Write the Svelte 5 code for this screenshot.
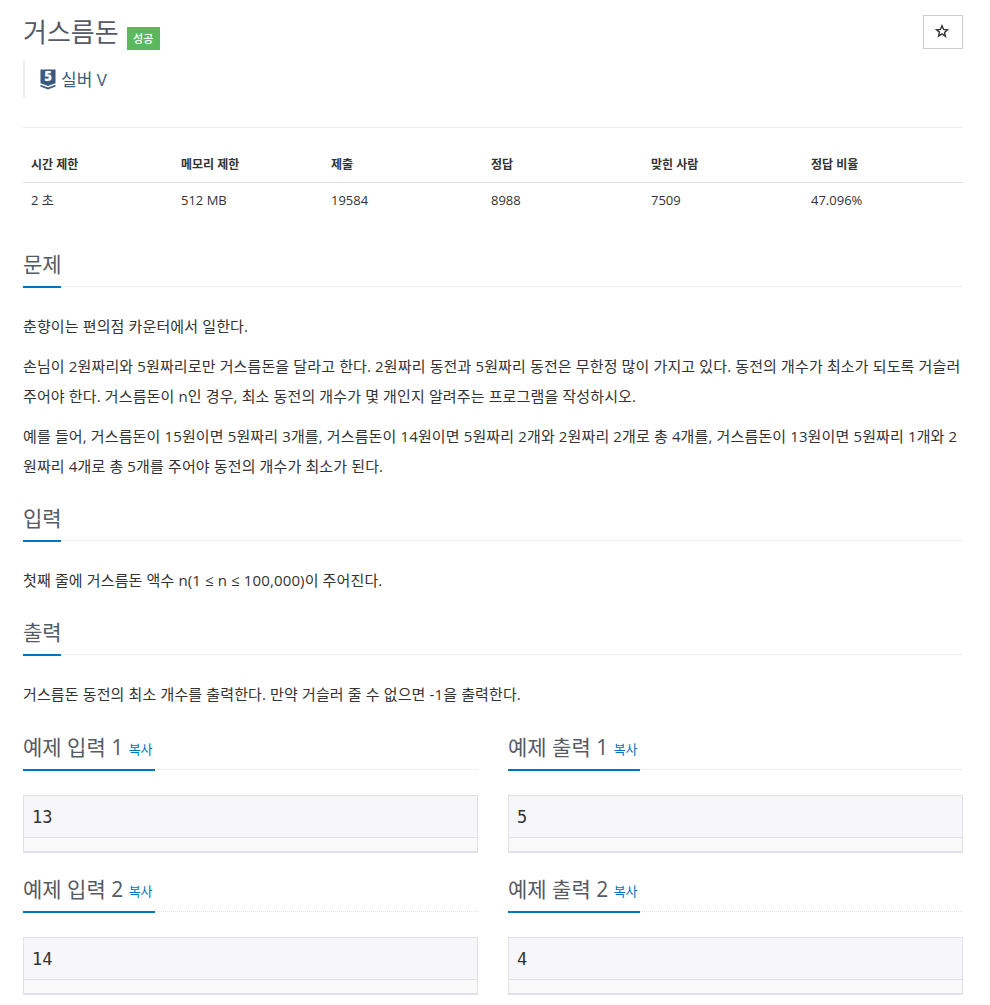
<script>
  const stats = [
    { head: '시간 제한', value: '2 초' },
    { head: '메모리 제한', value: '512 MB' },
    { head: '제출', value: '19584' },
    { head: '정답', value: '8988' },
    { head: '맞힌 사람', value: '7509' },
    { head: '정답 비율', value: '47.096%' }
  ];
  const samples = [
    { input: '13', output: '5', n: 1 },
    { input: '14', output: '4', n: 2 }
  ];
</script>

<div class="page">
  <header class="top">
    <div class="top__title">
      <h1 class="title">거스름돈</h1>
      <span class="badge">성공</span>
    </div>
    <button class="star" aria-label="즐겨찾기">
      <svg width="14" height="14" viewBox="0 0 24 24" fill="none" stroke="#333" stroke-width="2.4" stroke-linejoin="miter">
        <path d="M12 3l2.7 6.3 6.8.6-5.2 4.5 1.6 6.7L12 17l-5.9 3.6 1.6-6.7L2.5 9.9l6.8-.6z" />
      </svg>
    </button>
  </header>

  <blockquote class="tier">
    <svg class="tier__icon" width="16" height="21" viewBox="0 0 17 22">
      <path d="M0.5 0.5h16v14.5l-8 3-8-3z" fill="#3b5a7d" />
      <path d="M0.5 16.5l8 3 8-3v2l-8 3-8-3z" fill="#3b5a7d" />
      <text x="8.5" y="13" text-anchor="middle" class="tier__num">5</text>
    </svg>
    <span class="tier__name">실버 V</span>
  </blockquote>

  <hr class="rule" />

  <div class="stats">
    {#each stats as s}
      <div class="stats__head">{s.head}</div>
    {/each}
    {#each stats as s}
      <div class="stats__cell">{s.value}</div>
    {/each}
  </div>

  <section class="section">
    <div class="headline"><h2>문제</h2></div>
    <div class="body">
      <p>춘향이는 편의점 카운터에서 일한다.</p>
      <p>손님이 2원짜리와 5원짜리로만 거스름돈을 달라고 한다. 2원짜리 동전과 5원짜리 동전은 무한정 많이 가지고 있다. 동전의 개수가 최소가 되도록 거슬러 주어야 한다. 거스름돈이 n인 경우, 최소 동전의 개수가 몇 개인지 알려주는 프로그램을 작성하시오.</p>
      <p>예를 들어, 거스름돈이 15원이면 5원짜리 3개를, 거스름돈이 14원이면 5원짜리 2개와 2원짜리 2개로 총 4개를, 거스름돈이 13원이면 5원짜리 1개와 2원짜리 4개로 총 5개를 주어야 동전의 개수가 최소가 된다.</p>
    </div>
  </section>

  <section class="section">
    <div class="headline"><h2>입력</h2></div>
    <div class="body">
      <p>첫째 줄에 거스름돈 액수 n(1 ≤ n ≤ 100,000)이 주어진다.</p>
    </div>
  </section>

  <section class="section">
    <div class="headline"><h2>출력</h2></div>
    <div class="body">
      <p>거스름돈 동전의 최소 개수를 출력한다. 만약 거슬러 줄 수 없으면 -1을 출력한다.</p>
    </div>
  </section>

  <div class="samples">
    {#each samples as s}
      <section class="sample">
        <div class="headline"><h2>예제 입력 {s.n} <a class="copy" href="#top">복사</a></h2></div>
        <pre class="sample__data">{s.input}</pre>
        <div class="sample__foot"></div>
      </section>
      <section class="sample">
        <div class="headline"><h2>예제 출력 {s.n} <a class="copy" href="#top">복사</a></h2></div>
        <pre class="sample__data">{s.output}</pre>
        <div class="sample__foot"></div>
      </section>
    {/each}
  </div>
</div>

<style>
  :global(body) {
    background: #fff;
    font-family: "Open Sans", "Noto Sans CJK KR", sans-serif;
    color: #333;
  }

  .page {
    width: 940px;
    height: 1005px;
    overflow: hidden;
    padding: 15px 27px 0 23px;
  }

  .top {
    display: flex;
    justify-content: space-between;
    align-items: flex-start;
    height: 45px;
  }

  .top__title {
    display: flex;
    align-items: center;
    gap: 8px;
    height: 34px;
  }

  .title {
    margin: 0;
    font-size: 26px;
    line-height: 34px;
    font-weight: 400;
    color: #555a64;
  }

  .badge {
    display: flex;
    align-items: center;
    justify-content: center;
    width: 33px;
    height: 23px;
    margin-top: 12px;
    background: #5cb85c;
    color: #fff;
    font-size: 11px;
    font-weight: 500;
  }

  .star {
    display: flex;
    align-items: center;
    justify-content: center;
    width: 40px;
    height: 34px;
    padding: 0 3px 3px 0;
    background: #fff;
    border: 1px solid #ccc;
  }

  .tier {
    display: flex;
    align-items: center;
    gap: 5px;
    height: 38px;
    margin: 0;
    padding: 0 0 0 15px;
    border-left: 2px solid #eee;
  }

  .tier__icon {
    overflow: visible;
    margin-top: 1px;
  }

  .tier__num {
    fill: #fff;
    font-family: "Open Sans", sans-serif;
    font-size: 14px;
    font-weight: 800;
  }

  .tier__name {
    padding-bottom: 2px;
    font-size: 17px;
    color: #3b5a7d;
  }

  .rule {
    margin: 29px 0 0;
    border: 0;
    border-top: 1px solid #eee;
  }

  .stats {
    display: grid;
    grid-template-columns: 150px 150px 160px 160px 160px 160px;
    margin-top: 20px;
    font-size: 12px;
    line-height: 17px;
  }

  .stats__head {
    padding: 8px;
    height: 18px;
    font-weight: 700;
    border-bottom: 1px solid #ddd;
  }

  .stats__cell {
    padding: 8px;
    height: 18px;
    line-height: 18px;
    font-size: 13px;
  }

  .headline {
    margin-top: 20px;
    border-bottom: 1px dotted #e3e3ea;
    height: 39px;
  }

  .section:first-of-type .headline {
    margin-top: 30px;
  }

  .headline h2 {
    display: block;
    box-sizing: border-box;
    width: 38px;
    height: 41px;
    margin: 0;
    padding-top: 1px;
    white-space: nowrap;
    font-size: 21px;
    line-height: 33px;
    font-weight: 400;
    color: #555a64;
    border-bottom: 2px solid #0076c0;
  }

  .body {
    margin-top: 24px;
    font-size: 15px;
    letter-spacing: 0.13px;
    line-height: 30px;
    color: #333;
  }

  .body p {
    margin: 0 0 10px;
  }

  .samples {
    display: grid;
    grid-template-columns: 455px 455px;
    column-gap: 30px;
    row-gap: 8px;
  }

  .sample .headline {
    margin-top: 13px;
    height: 37px;
  }

  .sample h2 {
    width: 132px;
    height: 39px;
    padding-top: 0;
    line-height: 31px;
  }

  .copy {
    font-size: 13px;
    color: #0076c0;
    text-decoration: none;
    vertical-align: 1px;
  }

  .sample__data {
    margin: 25px 0 0;
    height: 41px;
    padding: 0 8px;
    font-family: "DejaVu Sans Mono", monospace;
    font-size: 17px;
    line-height: 43px;
    background: #f7f7f9;
    border: 1px solid #e1e1e8;
    color: #333;
  }

  .sample__foot {
    height: 13px;
    background: #f9f9f9;
    border: 1px solid #e1e1e8;
    border-top: 0;
    border-bottom-width: 2px;
  }
</style>
